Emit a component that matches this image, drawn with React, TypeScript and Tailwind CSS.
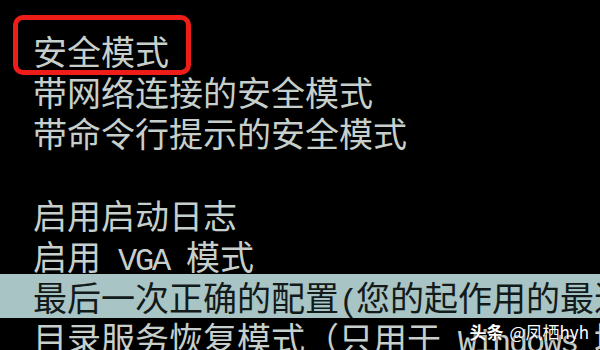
const Latin = ({ children }: { children: string }) => (
  <span className="font-['Liberation_Mono',monospace] text-[32px] tracking-[-2.2px] whitespace-pre">{children}</span>
);

const SafeModeMenu = () => {
  return (
    <div className="relative w-[600px] h-[350px] overflow-hidden bg-black font-['Noto_Sans_CJK_SC',sans-serif] text-[34px] text-[#c6cfcb]">
      <div className="flex flex-col pt-[30px]">
        <div className="relative h-[41px] leading-[41px] pl-[33px] whitespace-nowrap">
          安全模式
          <div className="absolute left-[13px] top-[-15px] w-[178px] h-[60px] rounded-[10px] border-[5px] border-[#ef1d1a]" />
        </div>
        <div className="h-[41px] leading-[41px] pl-[33px] whitespace-nowrap">带网络连接的安全模式</div>
        <div className="h-[41px] leading-[41px] pl-[33px] whitespace-nowrap">带命令行提示的安全模式</div>
        <div className="h-[41px]" />
        <div className="h-[41px] leading-[41px] pl-[33px] whitespace-nowrap">启用启动日志</div>
        <div className="h-[41px] leading-[41px] pl-[33px] whitespace-nowrap">
          启用<Latin> VGA </Latin>模式
        </div>
        <div className="-mt-[2px] mb-[-1px] pt-[2px] pb-[1px] h-[44px] leading-[41px] pl-[33px] whitespace-nowrap bg-[#a9c4c4] text-[#121a1a]">
          最后一次正确的配置<Latin>(</Latin>您的起作用的最近设置<Latin>)</Latin>
        </div>
        <div className="h-[41px] leading-[41px] pl-[33px] whitespace-nowrap">
          目录服务恢复模式（只用于<Latin> Windows </Latin>域控制器）
        </div>
      </div>

      {/* watermark */}
      <div className="absolute right-[11px] bottom-[8px] flex items-center gap-[6px] text-[17px] leading-[20px] text-white [text-shadow:0_0_3px_rgba(0,0,0,0.9)]">
        <span className="font-bold">头条</span>
        <span>@凤栖hyh</span>
      </div>
    </div>
  );
};

export default function App() {
  return <SafeModeMenu />;
}
